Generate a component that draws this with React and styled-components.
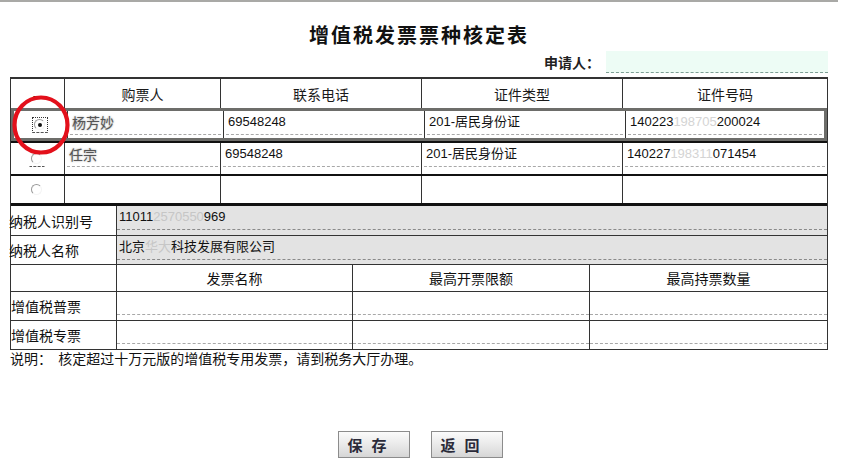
import React from "react";
import styled, { createGlobalStyle } from "styled-components";

const GlobalStyle = createGlobalStyle`
  html, body {
    margin: 0;
    padding: 0;
    background: #fff;
  }
  body {
    font-family: "Noto Sans CJK SC", "Liberation Sans", sans-serif;
    color: #111;
  }
  * {
    box-sizing: border-box;
  }
`;

const buyers = [
  { name: "杨芳妙", phone: "69548248", type: "201-居民身份证", id: ["140223", "198705", "200024"], checked: true },
  { name: "任宗", phone: "69548248", type: "201-居民身份证", id: ["140227", "198311", "071454"] },
  { name: "", phone: "", type: "", id: null },
];

export default function App() {
  return (
    <Page>
      <GlobalStyle />
      <Title>增值税发票票种核定表</Title>
      <Applicant>
        <span>申请人：</span>
        <ApplicantInput />
      </Applicant>

      <Table>
        <BuyerHeader>
          <HeadCell>--</HeadCell>
          <HeadCell>购票人</HeadCell>
          <HeadCell>联系电话</HeadCell>
          <HeadCell>证件类型</HeadCell>
          <HeadCell last>证件号码</HeadCell>
        </BuyerHeader>
        {buyers.map((b, i) => (
          <BuyerRow key={i} selected={b.checked} lastRow={i === buyers.length - 1}>
            <RadioCell>
              <RadioWrap focused={b.checked} underline={i === 1}>
                <Radio checked={b.checked} />
              </RadioWrap>
            </RadioCell>
            <Cell>
              {i < 2 && (
                <Field>
                  <Blurred>{b.name}</Blurred>
                </Field>
              )}
            </Cell>
            <Cell>{i < 2 && <Field>{b.phone}</Field>}</Cell>
            <Cell>{i < 2 && <Field>{b.type}</Field>}</Cell>
            <Cell last>
              {b.id && (
                <Field>
                  {b.id[0]}
                  <Faded>{b.id[1]}</Faded>
                  {b.id[2]}
                </Field>
              )}
            </Cell>
          </BuyerRow>
        ))}

        <InfoRow>
          <Label>纳税人识别号</Label>
          <ValueCell>
            <GrayField>
              11011<Faded>2570550</Faded>969
            </GrayField>
          </ValueCell>
        </InfoRow>
        <InfoRow>
          <Label>纳税人名称</Label>
          <ValueCell>
            <GrayField>
              北京<Faded>华大</Faded>科技发展有限公司
            </GrayField>
          </ValueCell>
        </InfoRow>

        <InvoiceRow head>
          <InvCell />
          <InvCell center>发票名称</InvCell>
          <InvCell center>最高开票限额</InvCell>
          <InvCell center last>最高持票数量</InvCell>
        </InvoiceRow>
        {["增值税普票", "增值税专票"].map((t) => (
          <InvoiceRow key={t}>
            <InvCell>{t}</InvCell>
            <InvCell><DashField /></InvCell>
            <InvCell><DashField /></InvCell>
            <InvCell last><DashField /></InvCell>
          </InvoiceRow>
        ))}
      </Table>

      <Note>说明：&nbsp; 核定超过十万元版的增值税专用发票，请到税务大厅办理。</Note>

      <Buttons>
        <Button>保存</Button>
        <Button>返回</Button>
      </Buttons>

      <Marker width="60" height="62" viewBox="0 0 60 62">
        <ellipse cx="30" cy="31" rx="26.5" ry="27.5" fill="none" stroke="#e3101b" strokeWidth="4.2" />
      </Marker>
    </Page>
  );
}

const Page = styled.div`
  position: relative;
  width: 838px;
  padding: 0 10px 20px 10px;
  border-top: 2px solid #a9a9a6;
  height: 476px;
`;

const Title = styled.h1`
  margin: 0;
  padding-top: 20px;
  text-align: center;
  font-size: 20px;
  line-height: 26px;
  font-weight: bold;
  letter-spacing: 2px;
  color: #111;
`;

const Applicant = styled.div`
  margin-top: 3px;
  height: 22px;
  display: flex;
  justify-content: flex-end;
  align-items: center;
  font-size: 14px;
  font-weight: bold;
  color: #222;
`;

const ApplicantInput = styled.div`
  width: 222px;
  height: 22px;
  margin-left: 6px;
  background: #edfcf5;
  border-bottom: 1px dashed #7fa096;
`;

const Table = styled.div`
  margin-top: 4px;
  border: 1px solid #333;
  border-top-width: 2px;
`;

const BuyerGrid = styled.div`
  display: grid;
  grid-template-columns: 54px 156px 201px 201px 1fr;
`;

const BuyerHeader = styled(BuyerGrid)`
  height: 29px;
`;

const HeadCell = styled.div`
  display: flex;
  align-items: center;
  justify-content: center;
  font-size: 14px;
  color: #1a1a1a;
  border-right: ${(p) => (p.last ? "none" : "1px solid #333")};
`;

const BuyerRow = styled(BuyerGrid)`
  height: ${(p) => (p.selected ? "33px" : p.lastRow ? "32px" : "33px")};
  border: ${(p) => (p.selected ? "3px solid #6d6d6a" : "none")};
  border-top: ${(p) => (p.selected ? "3px solid #6d6d6a" : "2px solid #111")};
  border-bottom: ${(p) => (p.lastRow ? "3px solid #111" : p.selected ? "3px solid #6d6d6a" : "none")};
`;

const Cell = styled.div`
  border-right: ${(p) => (p.last ? "none" : "1px solid #333")};
  padding: 2px 2px 0 2px;
`;

const RadioCell = styled.div`
  border-right: 1px solid #333;
  display: flex;
  align-items: center;
  justify-content: center;
`;

const RadioWrap = styled.div`
  width: 16px;
  height: 16px;
  display: flex;
  align-items: center;
  justify-content: center;
  border: ${(p) => (p.focused ? "1px dotted #333" : "1px solid transparent")};
  border-bottom: ${(p) => (p.focused || p.underline ? "1px dashed #555" : "1px solid transparent")};
  margin-left: -2px;
`;

const Radio = styled.span`
  position: relative;
  width: 11px;
  height: 11px;
  border-radius: 50%;
  border: 1px solid #f4f4f4;
  border-left-color: #9a9a9a;
  border-top-color: #9a9a9a;
  &::after {
    content: "";
    display: ${(p) => (p.checked ? "block" : "none")};
    position: absolute;
    left: 3px;
    top: 3px;
    width: 4px;
    height: 4px;
    border-radius: 50%;
    background: #111;
  }
`;

const Field = styled.div`
  height: 22px;
  font-family: "Liberation Sans", "Noto Sans CJK SC", sans-serif;
  font-size: 13px;
  line-height: 18px;
  padding-left: 2px;
  color: #111;
  border-bottom: 1px dashed #a8a8a8;
  white-space: nowrap;
  overflow: hidden;
`;

const Blurred = styled.span`
  font-family: "Noto Sans CJK SC", sans-serif;
  font-size: 14px;
  color: #555;
  text-shadow: 0 0 2px #999;
`;

const Faded = styled.span`
  color: #d4d4d4;
`;

const InfoRow = styled.div`
  display: grid;
  grid-template-columns: 106px 1fr;
  height: 30px;
  border-bottom: 1px solid #333;
  &:nth-of-type(2n) {
    height: 29px;
  }
`;

const Label = styled.div`
  display: flex;
  align-items: center;
  font-size: 14px;
  color: #111;
  border-right: 1px solid #333;
  margin-left: -2px;
`;

const ValueCell = styled.div`
  background: #e3e3e3;
  padding-top: 2px;
`;

const GrayField = styled(Field)`
  height: 22px;
  border-bottom-color: #8a8a8a;
  & > span {
    color: #c6c6c6;
  }
`;

const InvoiceRow = styled.div`
  display: grid;
  grid-template-columns: 106px 236px 237px 1fr;
  height: ${(p) => (p.head ? "27px" : "29px")};
  border-bottom: 1px solid #333;
  &:last-child {
    border-bottom: none;
    height: 28px;
  }
`;

const InvCell = styled.div`
  display: flex;
  align-items: center;
  justify-content: ${(p) => (p.center ? "center" : "flex-start")};
  font-size: 14px;
  color: #111;
  border-right: ${(p) => (p.last ? "none" : "1px solid #333")};
`;

const DashField = styled.div`
  align-self: flex-end;
  width: 100%;
  margin-bottom: 5px;
  border-bottom: 1px dashed #a8a8a8;
`;

const Note = styled.div`
  margin-top: 0;
  font-size: 14px;
  line-height: 17px;
  color: #111;
`;

const Buttons = styled.div`
  margin-top: 64px;
  display: flex;
  justify-content: center;
  gap: 21px;
  padding-left: 2px;
`;

const Button = styled.button`
  width: 72px;
  height: 27px;
  border: 1px solid #8c8c8c;
  background: linear-gradient(#fbfbfb, #e6e6e6 60%, #d6d6d6);
  font-family: "Noto Sans CJK SC", sans-serif;
  font-size: 15px;
  font-weight: bold;
  color: #2b2b3a;
  letter-spacing: 9px;
  text-align: left;
  padding: 0 0 0 9px;
`;

const Marker = styled.svg`
  position: absolute;
  left: 11px;
  top: 92px;
`;
